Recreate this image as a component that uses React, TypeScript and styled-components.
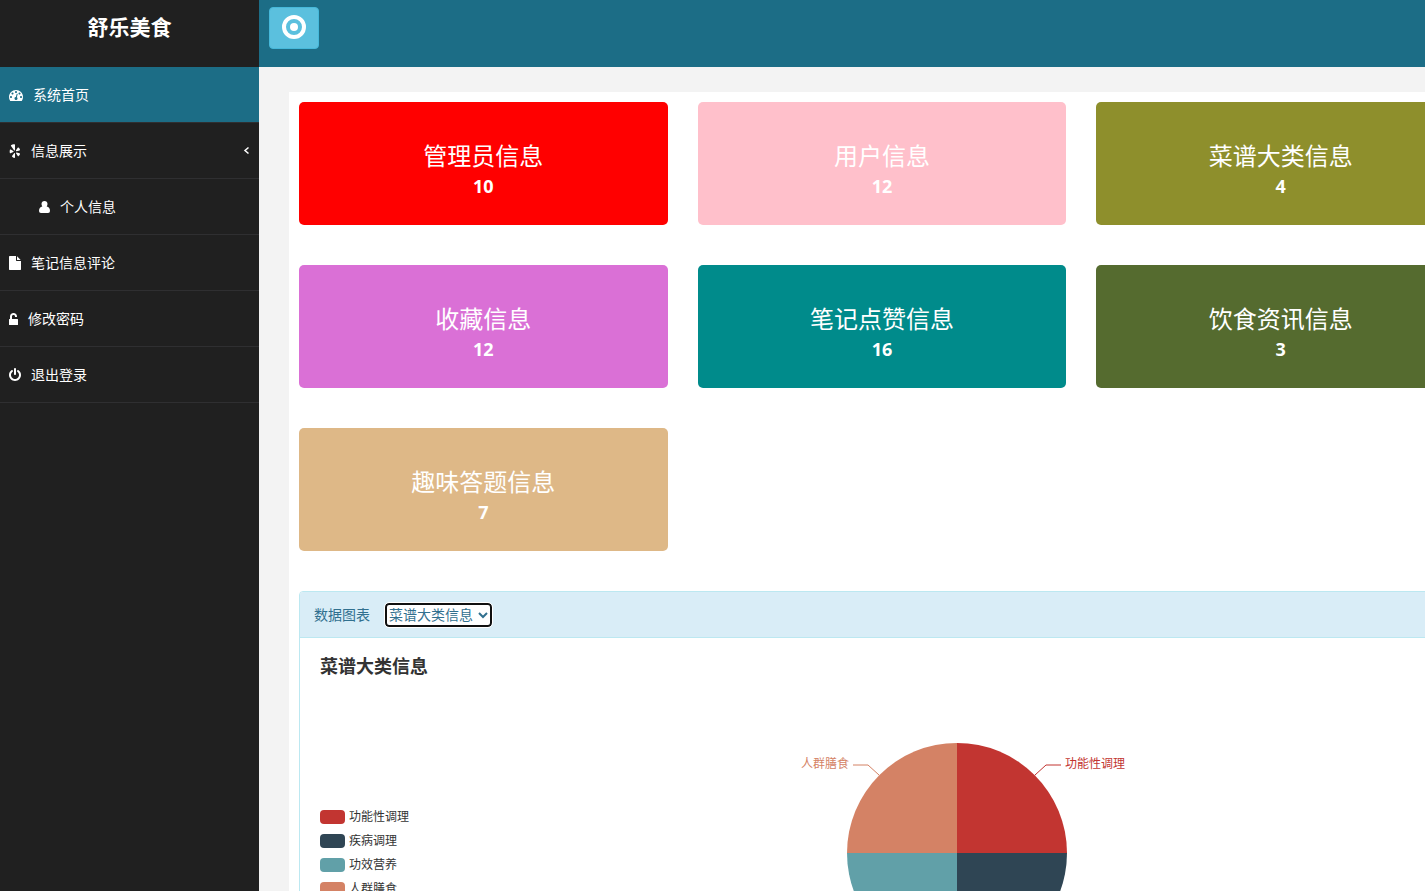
import React from "react";
import styled, { createGlobalStyle } from "styled-components";

const GlobalStyle = createGlobalStyle`
  *, *::before, *::after { box-sizing: border-box; }
  body {
    margin: 0;
    font-family: "Open Sans", "Noto Sans CJK SC", sans-serif;
    font-size: 14px;
    line-height: 20px;
    color: #333;
    background: #f3f3f3;
  }
  h1, h2, h3, p, ul { margin: 0; padding: 0; }
  ul { list-style: none; }
`;

const Shell = styled.div`
  display: flex;
  height: 100vh;
  overflow: hidden;
`;

const Sidebar = styled.aside`
  flex: 0 0 259px;
  background: #202020;
  color: #fff;
`;

const Brand = styled.h1`
  height: 67px;
  padding-top: 12px;
  font-size: 21px;
  line-height: 30px;
  font-weight: 700;
  text-align: center;
`;

const NavLink = styled.a<{ $active?: boolean; $nested?: boolean }>`
  display: flex;
  align-items: center;
  gap: 10px;
  height: 56px;
  padding: 0 9px 0 ${(p) => (p.$nested ? 39 : 9)}px;
  border-bottom: 1px solid #2f2f31;
  background: ${(p) => (p.$active ? "#1c6d86" : "transparent")};
  color: #fff;
  text-decoration: none;
`;

const NavLabel = styled.span`
  flex: 1;
`;

const Glyph = styled.svg`
  display: block;
  flex: none;
  fill: currentColor;
`;

const Main = styled.div`
  flex: 1;
  min-width: 0;
  overflow-x: hidden;
  overflow-y: auto;
  scrollbar-width: none;
`;

const TopBar = styled.header`
  height: 67px;
  padding: 7px 10px;
  background: #1c6d86;
`;

const ToggleButton = styled.button`
  display: flex;
  justify-content: center;
  width: 50px;
  height: 42px;
  padding: 7px 0;
  border: 1px solid #46b8da;
  border-radius: 4px;
  background: #5bc0de;
  color: #fff;
`;

const Content = styled.main`
  box-sizing: content-box;
  width: 100%;
  margin: 25px 30px 0;
  padding: 10px;
  background: #fff;
`;

const CardGrid = styled.div`
  display: grid;
  grid-template-columns: repeat(3, 1fr);
  gap: 40px 30px;
  margin-bottom: 40px;
`;

const Card = styled.section<{ $color: string }>`
  height: 123px;
  padding-top: 36px;
  border-radius: 5px;
  background: ${(p) => p.$color};
  color: #fff;
  text-align: center;
`;

const CardTitle = styled.h2`
  font-size: 24px;
  line-height: 36px;
  font-weight: 400;
`;

const CardCount = styled.p`
  font-size: 18px;
  line-height: 24px;
  font-weight: 700;
`;

const Panel = styled.section`
  border: 1px solid #bce8f1;
  border-radius: 4px;
  overflow: hidden;
`;

const PanelHeading = styled.div`
  display: flex;
  align-items: center;
  gap: 15px;
  height: 46px;
  padding: 0 14px;
  border-bottom: 1px solid #bce8f1;
  background: #d9edf7;
  color: #31708f;
`;

const SelectWrap = styled.span`
  display: grid;
  align-items: center;

  & > * { grid-area: 1 / 1; }
  & > svg {
    justify-self: end;
    margin-right: 4px;
    pointer-events: none;
  }
`;

const Select = styled.select`
  appearance: none;
  width: 107px;
  height: 24px;
  padding: 0 2px;
  border: 2px solid #101010;
  border-radius: 4px;
  outline: 1px solid #fff;
  background: #fff;
  color: #31708f;
  font: inherit;
`;

const PanelBody = styled.div`
  padding: 15px;
`;

const Chart = styled.div`
  display: grid;
  grid-template-columns: 150px 1fr;
  grid-template-rows: 84px 330px;
`;

const ChartTitle = styled.h3`
  grid-column: 1 / -1;
  padding-left: 5px;
  font-size: 18px;
  line-height: 26px;
  font-weight: 700;
`;

const Legend = styled.ul`
  padding: 68px 0 0 5px;
`;

const LegendItem = styled.li`
  display: flex;
  align-items: center;
  gap: 4px;
  height: 24px;
  font-size: 12px;
  line-height: 16px;
`;

const Swatch = styled.span<{ $color: string }>`
  width: 25px;
  height: 14px;
  border-radius: 4px;
  background: ${(p) => p.$color};
`;

const Pie = styled.svg`
  display: block;
  justify-self: center;
  font-size: 12px;
`;

const icons = {
  dashboard: {
    width: 14,
    box: "0 0 1792 1792",
    d: "M384 1152q0-53-37.5-90.5t-90.5-37.5-90.5 37.5-37.5 90.5 37.5 90.5 90.5 37.5 90.5-37.5 37.5-90.5zm192-448q0-53-37.5-90.5t-90.5-37.5-90.5 37.5-37.5 90.5 37.5 90.5 90.5 37.5 90.5-37.5 37.5-90.5zm428 481l101-382q6-26-7.5-48.5t-38.5-29.5-48 6.5-30 39.5l-101 382q-60 5-107 43.5t-63 98.5q-20 77 20 146t117 89 146-20 89-117q16-60-6-117t-72-91zm660-33q0-53-37.5-90.5t-90.5-37.5-90.5 37.5-37.5 90.5 37.5 90.5 90.5 37.5 90.5-37.5 37.5-90.5zm-640-640q0-53-37.5-90.5t-90.5-37.5-90.5 37.5-37.5 90.5 37.5 90.5 90.5 37.5 90.5-37.5 37.5-90.5zm448 192q0-53-37.5-90.5t-90.5-37.5-90.5 37.5-37.5 90.5 37.5 90.5 90.5 37.5 90.5-37.5 37.5-90.5zm320 448q0 261-141 483-19 29-54 29h-1402q-35 0-54-29-141-221-141-483 0-182 71-348t191-286 286-191 348-71 348 71 286 191 191 286 71 348z",
  },
  pinwheel: {
    width: 12,
    box: "0 0 12 14",
    d: "M2 1.200Q3.600 0 5.500.300Q6 .400 6 1V6Q5.800 7 5 6.300L2 1.900Q1.800 1.500 2 1.200ZM.900 5.800Q1.200 5.400 1.700 5.600L4.300 6.900Q5 7.400 4.300 7.900L1.500 9.200Q.900 9.300.800 8.700Q.500 7.200.900 5.800ZM5.300 9Q6 8.700 6 9.400V13.300Q5.900 14 5.200 13.900Q4 13.600 3.200 12.800Q2.800 12.400 3.200 11.800ZM7 6.300 8.700 3.700Q9.100 3.200 9.600 3.600Q10.600 4.500 11 5.600Q11.100 6.200 10.500 6.400L7.600 7.200Q6.700 7.200 7 6.300ZM7.700 8.400 10.600 9.300Q11.200 9.600 11 10.200Q10.500 11.300 9.700 12Q9.200 12.400 8.800 11.900L7 9.300Q6.800 8.300 7.700 8.400Z",
  },
  user: {
    width: 11,
    box: "0 0 11 14",
    d: "M5.500 1C7.300 1 8.500 2.200 8.500 4C8.500 5 8.200 5.800 7.700 6.400Q11 7 11 11Q11 13 9 13H2Q0 13 0 11Q0 7 3.300 6.400C2.800 5.800 2.500 5 2.500 4C2.500 2.200 3.700 1 5.500 1Z",
  },
  file: {
    width: 12,
    box: "0 0 1536 1792",
    d: "M1024 512V40q22 14 36 28l408 408q14 14 28 36h-472zM896 544q0 40 28 68t68 28h544v1056q0 40-28 68t-68 28H96q-40 0-68-28t-28-68V96Q0 56 28 28T96 0h800v544z",
  },
  unlock: {
    width: 9,
    box: "0 0 9 14",
    d: "M3 7H8.500Q9 7 9 7.500V12.500Q9 13 8.500 13H.500Q0 13 0 12.500V7.500Q0 7 .500 7H1V4.500C1 2.500 2.500 1 4.500 1S8 2.500 8 4.500V5H6V4.500C6 3.500 5.400 3 4.500 3S3 3.500 3 4.500Z",
  },
  power: {
    width: 12,
    box: "0 0 1536 1792",
    d: "M1536 896q0 156-61 298t-164 245-245 164-298 61-298-61-245-164-164-245-61-298q0-182 80.5-343t226.5-270q43-32 95.5-25t83.5 50q32 42 24.500 94.500t-49.500 84.500q-98 74-151.500 181t-53.500 228q0 104 40.500 198.500t109.500 163.500 163.500 109.500 198.500 40.500 198.500-40.500 163.500-109.500 109.500-163.500 40.500-198.500q0-121-53.500-228t-151.500-181q-42-32-49.500-84.500t24.500-94.500q31-43 84-50t95 25q146 109 226.500 270t80.500 343zM896 128v640q0 52-38 90t-90 38-90-38-38-90V128q0-52 38-90t90-38 90 38 38 90z",
  },
};

type IconName = keyof typeof icons;

const Icon = ({ name }: { name: IconName }) => (
  <Glyph width={icons[name].width} height={14} viewBox={icons[name].box} aria-hidden="true">
    <path d={icons[name].d} />
  </Glyph>
);

const Chevron = () => (
  <Glyph width={7} height={9} viewBox="0 0 7 9" aria-hidden="true">
    <path d="M5.500 1.500 2 4.500l3.500 3" fill="none" stroke="currentColor" strokeWidth="1.5" />
  </Glyph>
);

const nav: {
  label: string;
  icon: IconName;
  active?: boolean;
  nested?: boolean;
  expandable?: boolean;
}[] = [
  { label: "系统首页", icon: "dashboard", active: true },
  { label: "信息展示", icon: "pinwheel", expandable: true },
  { label: "个人信息", icon: "user", nested: true },
  { label: "笔记信息评论", icon: "file" },
  { label: "修改密码", icon: "unlock" },
  { label: "退出登录", icon: "power" },
];

const cards = [
  { title: "管理员信息", count: 10, color: "#ff0000" },
  { title: "用户信息", count: 12, color: "#ffc0cb" },
  { title: "菜谱大类信息", count: 4, color: "#8e8f2c" },
  { title: "收藏信息", count: 12, color: "#da70d6" },
  { title: "笔记点赞信息", count: 16, color: "#008b8b" },
  { title: "饮食资讯信息", count: 3, color: "#556b2f" },
  { title: "趣味答题信息", count: 7, color: "#deb887" },
];

const series = [
  { label: "功能性调理", color: "#c23531" },
  { label: "疾病调理", color: "#2f4554" },
  { label: "功效营养", color: "#61a0a8" },
  { label: "人群膳食", color: "#d48265" },
];

export default function App() {
  return (
    <>
      <GlobalStyle />
      <Shell>
        <Sidebar>
          <Brand>舒乐美食</Brand>
          <nav>
            <ul>
              {nav.map((item) => (
                <li key={item.label}>
                  <NavLink href="#" $active={item.active} $nested={item.nested}>
                    <Icon name={item.icon} />
                    <NavLabel>{item.label}</NavLabel>
                    {item.expandable && <Chevron />}
                  </NavLink>
                </li>
              ))}
            </ul>
          </nav>
        </Sidebar>
        <Main>
          <TopBar>
            <ToggleButton type="button" aria-label="切换菜单">
              <Glyph width={24} height={24} viewBox="0 0 24 24" aria-hidden="true">
                <circle cx="12" cy="12" r="10" fill="none" stroke="currentColor" strokeWidth="4" />
                <circle cx="12" cy="12" r="4" />
              </Glyph>
            </ToggleButton>
          </TopBar>
          <Content>
            <CardGrid>
              {cards.map((card) => (
                <Card key={card.title} $color={card.color}>
                  <CardTitle>{card.title}</CardTitle>
                  <CardCount>{card.count}</CardCount>
                </Card>
              ))}
            </CardGrid>
            <Panel>
              <PanelHeading>
                <label htmlFor="chart-source">数据图表</label>
                <SelectWrap>
                  <Select id="chart-source">
                    <option>菜谱大类信息</option>
                  </Select>
                  <Glyph width={10} height={8} viewBox="0 0 10 8" aria-hidden="true">
                    <path d="M1 2l4 4 4-4" fill="none" stroke="currentColor" strokeWidth="2" />
                  </Glyph>
                </SelectWrap>
              </PanelHeading>
              <PanelBody>
                <Chart>
                  <ChartTitle>菜谱大类信息</ChartTitle>
                  <Legend>
                    {series.map((s) => (
                      <LegendItem key={s.label}>
                        <Swatch $color={s.color} />
                        {s.label}
                      </LegendItem>
                    ))}
                  </Legend>
                  <Pie width={400} height={240} viewBox="-200 -116 400 240">
                    <path d="M0 0V-110A110 110 0 0 1 110 0Z" fill="#c23531" />
                    <path d="M0 0H110A110 110 0 0 1 0 110Z" fill="#2f4554" />
                    <path d="M0 0V110A110 110 0 0 1 -110 0Z" fill="#61a0a8" />
                    <path d="M0 0H-110A110 110 0 0 1 0 -110Z" fill="#d48265" />
                    <g fill="none">
                      <path d="M78-78 89-88H104" stroke="#c23531" />
                      <path d="M78 78 89 88H104" stroke="#2f4554" />
                      <path d="M-78 78-89 88H-104" stroke="#61a0a8" />
                      <path d="M-78-78-89-88H-104" stroke="#d48265" />
                    </g>
                    <text x="108" y="-85" fill="#c23531">功能性调理</text>
                    <text x="108" y="92" fill="#2f4554">疾病调理</text>
                    <text x="-108" y="92" fill="#61a0a8" textAnchor="end">功效营养</text>
                    <text x="-108" y="-85" fill="#d48265" textAnchor="end">人群膳食</text>
                  </Pie>
                </Chart>
              </PanelBody>
            </Panel>
          </Content>
        </Main>
      </Shell>
    </>
  );
}
